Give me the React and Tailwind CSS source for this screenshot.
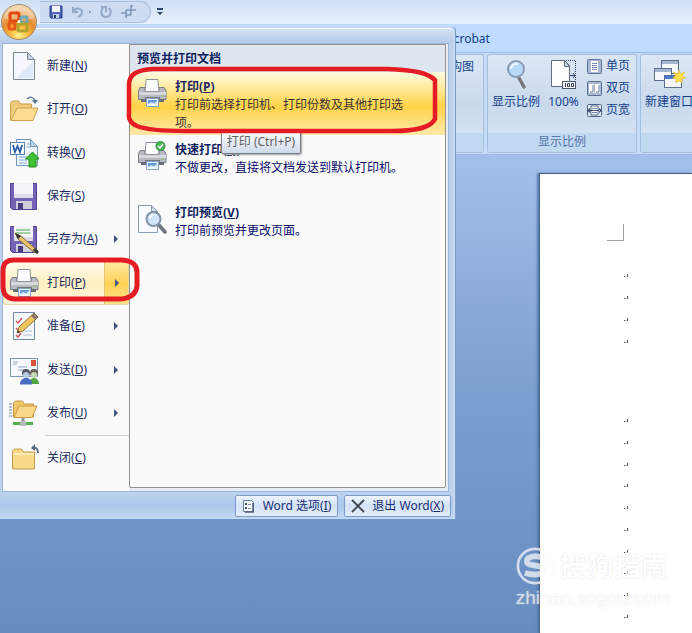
import { useState } from "react";

const menuItems = [
  { id: "new", label: "新建", hotkey: "N", icon: NewIcon },
  { id: "open", label: "打开", hotkey: "O", icon: OpenIcon },
  { id: "convert", label: "转换", hotkey: "V", icon: ConvertIcon },
  { id: "save", label: "保存", hotkey: "S", icon: SaveIcon },
  { id: "saveAs", label: "另存为", hotkey: "A", icon: SaveAsIcon, sub: true },
  { id: "print", label: "打印", hotkey: "P", icon: PrinterIcon, sub: true },
  { id: "prepare", label: "准备", hotkey: "E", icon: PrepareIcon, sub: true },
  { id: "send", label: "发送", hotkey: "D", icon: SendIcon, sub: true },
  { id: "publish", label: "发布", hotkey: "U", icon: PublishIcon, sub: true },
];

const printItems = [
  { id: "print", label: "打印", hotkey: "P", text: "打印前选择打印机、打印份数及其他打印选项。", icon: PrinterIcon },
  { id: "quick", label: "快速打印", hotkey: "Q", text: "不做更改，直接将文档发送到默认打印机。", icon: QuickPrintIcon },
  { id: "preview", label: "打印预览", hotkey: "V", text: "打印前预览并更改页面。", icon: PreviewIcon },
];

export default function App() {
  const [active, setActive] = useState("print");

  return (
    <div className="relative flex min-h-screen flex-col overflow-hidden bg-[#6f95c6] font-['Noto_Sans','Noto_Sans_CJK_SC',sans-serif] text-xs text-[#15428b]">
      <TitleBar />
      <Ribbon />
      <Workspace />
      <OfficeMenu active={active} onSelect={setActive} />
      <div className="absolute left-0 top-1">
        <OfficeButton />
      </div>
      <Watermark />
    </div>
  );
}

function TitleBar() {
  return (
    <header className="flex h-6 items-center bg-linear-to-b from-[#cfdff5] via-[#dbe8f9] to-[#e8f1fc] pl-10">
      <div className="flex h-[22px] w-[111px] items-center gap-2 rounded-r-full border border-l-0 border-[#a9bfdd] bg-[#cddcf0] pl-[9px]">
        <button aria-label="保存">
          <svg width="14" height="14" viewBox="0 0 14 14">
            <path d="M1 1h12v12H2l-1-1z" fill="#5064b8" stroke="#283a84" />
            <path d="M3 1h8v6H3z" fill="#f1f5fc" />
            <path d="M4 9h6v4H4z" fill="#c4cde5" />
            <path d="M5 10h2v3H5z" fill="#26336f" />
          </svg>
        </button>
        <button aria-label="撤消" className="flex items-center gap-1">
          <svg width="14" height="14" viewBox="0 0 14 14" fill="none" stroke="#96aac8" strokeWidth="2">
            <path d="M2 2v5h5M2 7c3-5 9-4 9 0 0 2-2 4-4 5" />
          </svg>
          <span className="size-[2px] bg-[#93a5c0]" />
        </button>
        <button aria-label="重复">
          <svg width="14" height="14" viewBox="0 0 14 14" fill="none" stroke="#96aac8" strokeWidth="2">
            <path d="M10 3c3 3 2 9-3 9s-6-6-3-9M2 2h5v5" />
          </svg>
        </button>
        <button aria-label="对齐">
          <svg width="15" height="14" viewBox="0 0 15 14" fill="none" stroke="#7f95b6" strokeWidth="1.500">
            <path d="M0 8h5M5 5v8M5 5h10M10 1v9M5 10h5M9 1h3" />
          </svg>
        </button>
      </div>
      <button aria-label="自定义快速访问工具栏" className="ml-[5px]">
        <svg width="8" height="8" viewBox="0 0 8 8" fill="#2f4873">
          <path d="M1 0h6v2H1zM1 4h6L4 7z" />
        </svg>
      </button>
    </header>
  );
}

function Ribbon() {
  return (
    <>
      <div role="tablist" className="flex h-7 items-center bg-[#bfdbff] pl-[446px] pt-[2px]">
        <button role="tab">Acrobat</button>
      </div>
      <div className="flex h-[103px] shrink-0 gap-[3px] border-y border-[#9dbbe4] bg-[#c6dbf5] py-[1px]">
        <RibbonGroup className="w-[484px] shrink-0">
          <div className="flex justify-end px-[9px] pt-1">
            <button>文档结构图</button>
          </div>
        </RibbonGroup>
        <RibbonGroup label="显示比例" className="w-[150px] shrink-0">
          <div className="flex justify-between pl-1 pr-[6px] pt-[3px]">
            <button className="flex flex-col items-center gap-1">
              <ZoomIcon />
              显示比例
            </button>
            <button className="flex flex-col items-center gap-1">
              <HundredIcon />
              100%
            </button>
            <div className="flex flex-col gap-[6px]">
              <button className="flex items-center gap-1">
                <OnePageIcon />
                单页
              </button>
              <button className="flex items-center gap-1">
                <TwoPagesIcon />
                双页
              </button>
              <button className="flex items-center gap-1">
                <PageWidthIcon />
                页宽
              </button>
            </div>
          </div>
        </RibbonGroup>
        <RibbonGroup className="min-w-[64px] flex-1">
          <div className="flex pl-1 pt-[3px]">
            <button className="flex shrink-0 flex-col items-center gap-1 whitespace-nowrap">
              <NewWindowIcon />
              新建窗口
            </button>
          </div>
        </RibbonGroup>
      </div>
    </>
  );
}

function RibbonGroup({ label, className, children }) {
  return (
    <section
      className={`flex flex-col overflow-hidden rounded-[3px] border border-[#a3bfdf] bg-linear-to-b from-[#dce7f4] via-[#c9d9ed] to-[#d9e8f6] ${className}`}
    >
      <div className="flex-1">{children}</div>
      <div className="h-[19px] bg-[#c1d8f1] text-center leading-[18px] text-[#5476a8]">{label}</div>
    </section>
  );
}

function Workspace() {
  return (
    <main className="flex flex-1 bg-linear-to-b from-[#a3c0ea] via-[#7b9fd0] to-[#668cc0] pl-[539px] pt-[18px]">
      <div className="flex-1 border-l border-t border-[#48607f] bg-white pb-1 pt-[50px] shadow-[-2px_0_2px_#587cae]">
        <div className="ml-[67px] size-[17px] border-b border-r border-[#a0a0a0]" />
        <div className="ml-[84px] mt-6 grid h-[87px] auto-rows-fr items-center">
          {Array.from({ length: 4 }, (_, i) => (
            <ParagraphMark key={i} />
          ))}
        </div>
        <div className="ml-[84px] mt-[58px] grid h-[217px] auto-rows-fr items-center">
          {Array.from({ length: 10 }, (_, i) => (
            <ParagraphMark key={i} />
          ))}
        </div>
      </div>
    </main>
  );
}

function ParagraphMark() {
  return (
    <svg width="6" height="5" viewBox="0 0 6 5">
      <path d="M3 1h1v3H3z" fill="#555" />
      <path d="M0 3h1v1H0z" fill="#444" />
      <path d="M1 3h2v1H1z" fill="#ccc" />
    </svg>
  );
}

function OfficeMenu({ active, onSelect }) {
  return (
    <div className="absolute left-0 top-[27px] w-[455px] rounded-tr-[4px] border-r-2 border-t border-[#c7d9f0] bg-[#bed2ee] shadow-[1px_0_0_#7f9cc5]">
      <div className="h-[15px] rounded-tr-[4px] border-t border-white bg-linear-to-b from-[#d4e2f4] to-[#b4cbe9]" />
      <div className="ml-[2px] mr-[4px] flex h-[449px] border border-[#9bb5da] bg-[#e8ecf3]">
        <nav className="w-[126px] bg-[#fafafa]">
          <div className="grid h-[391px] auto-rows-fr">
            {menuItems.map((m) => (
              <MenuRow key={m.id} item={m} active={active === m.id} onSelect={onSelect} />
            ))}
          </div>
          <div className="ml-[42px] border-t border-[#cdd0d5]" />
          <MenuRow item={{ id: "close", label: "关闭", hotkey: "C", icon: CloseIcon }} onSelect={onSelect} />
        </nav>
        <section className="mb-[3px] mr-[2px] flex-1 rounded-b-[2px] border border-[#96938c] bg-[#fafafa] text-[#0b0b6b]">
          <h2 className="h-[27px] bg-[#dde6ee] pl-[7px] font-bold leading-[27px] text-[#0e2260]">预览并打印文档</h2>
          <div className="relative">
            {printItems.map((p, i) => (
              <button
                key={p.id}
                className={`flex h-[63px] w-full items-start gap-2 pl-[7px] pr-[36px] pt-[6px] text-left ${
                  i === 0 ? "bg-[linear-gradient(180deg,#fffbe0_0%,#ffeeab_20%,#ffd348_55%,#ffe28a_85%,#ffe9a8_100%)]" : ""
                }`}
              >
                <span className="shrink-0">
                  <p.icon />
                </span>
                <span className="leading-[18px]">
                  <span className={`block font-bold ${i === 0 ? "text-[#26265e]" : "text-[#0e2260]"}`}>
                    {p.label}(<u>{p.hotkey}</u>)
                  </span>
                  <span className={`block ${i === 0 ? "text-[#3a3230]" : ""}`}>{p.text}</span>
                </span>
              </button>
            ))}
            <div
              role="tooltip"
              className="absolute left-[91px] top-[58px] h-6 w-20 rounded-[2px] border border-[#7c7c80] bg-linear-to-b from-white to-[#cfdaec] text-center leading-[22px] text-[#626262] shadow-[1px_1px_2px_#a0a0a0]"
            >
              打印 (Ctrl+P)
            </div>
            <svg
              className="pointer-events-none absolute left-[-5px] top-[-7px]"
              width="316"
              height="70"
              viewBox="0 0 316 70"
              fill="none"
              stroke="#e51c23"
              strokeWidth="4.500"
            >
              <path d="M28 4H262C290 5 303 8 310 15V54C306 62 294 66 266 66H60C40 66 22 65 12 61C5 58 3 54 4 48V20C4 9 12 5 28 4Z" />
            </svg>
          </div>
        </section>
      </div>
      <footer className="flex h-[27px] items-center justify-end gap-[6px] bg-linear-to-b from-[#bfd3ef] via-[#abc7ea] to-[#c3d9f4] pr-[2px]">
        <FooterButton icon={<OptionsIcon />}>
          Word 选项(<u>I</u>)
        </FooterButton>
        <FooterButton
          icon={
            <svg width="14" height="14" viewBox="0 0 14 14" stroke="#3f434b" strokeWidth="1.800">
              <path d="M1 1l12 12M13 1L1 13" />
            </svg>
          }
        >
          退出 Word(<u>X</u>)
        </FooterButton>
      </footer>
      {/* red marker around the active row */}
      <svg
        className="pointer-events-none absolute left-0 top-[228px]"
        width="140"
        height="46"
        viewBox="0 0 140 46"
        fill="none"
        stroke="#e51c23"
        strokeWidth="5"
      >
        <path d="M14 4H122C133 5 137 9 137 16V30C136 38 130 43 118 43H14C6 42 3 38 3 30V15C3 7 7 4 14 4Z" />
      </svg>
    </div>
  );
}

function MenuRow({ item, active, onSelect }) {
  const Icon = item.icon;
  return (
    <button
      onClick={() => onSelect(item.id)}
      className={`flex min-h-[43px] w-full items-center text-left text-[#1b2a63] ${
        active ? "rounded-[2px] border border-[#e8d8a4] bg-linear-to-b from-[#fffdf0] via-[#ffefc0] to-[#fff6dc]" : "border border-transparent"
      }`}
    >
      <span className="ml-[5px] mr-2 shrink-0">
        <Icon />
      </span>
      <span className="flex-1 whitespace-nowrap">
        {item.label}(<u>{item.hotkey}</u>)
      </span>
      {item.sub && (
        <span
          className={`flex w-6 items-center justify-center self-stretch ${
            active ? "border-l border-[#e3c675] bg-linear-to-b from-[#ffe9a0] via-[#ffd154] to-[#ffe08a]" : ""
          }`}
        >
          <svg width="4" height="8" viewBox="0 0 4 8" fill="#40557f">
            <path d="M0 0l4 4-4 4z" />
          </svg>
        </span>
      )}
    </button>
  );
}

function FooterButton({ icon, children }) {
  return (
    <button className="flex h-[22px] items-center gap-[7px] whitespace-nowrap rounded-[2px] border border-[#7d9cca] bg-linear-to-b from-[#edf4fd] via-[#d3e2f6] to-[#e3eefb] px-[6px] text-[#1c2f75]">
      {icon}
      <span>{children}</span>
    </button>
  );
}

function Watermark() {
  return (
    <div className="pointer-events-none absolute bottom-[23px] right-[22px] flex flex-col text-white opacity-70 [text-shadow:0_0_2px_#d4d4d4]">
      <div className="flex items-center gap-[6px]">
        <svg width="38" height="38" viewBox="0 0 38 38" fill="none" stroke="#fff">
          <circle cx="19" cy="19" r="18" stroke="#e4e4e4" strokeWidth="1" />
          <circle cx="19" cy="19" r="17" strokeWidth="2.500" />
          <path d="M28 11C20 8 10 9 11 15C12 20 27 17 27 23C27 29 15 28 9 26" stroke="#e6e6e6" strokeWidth="6" />
          <path d="M28 11C20 8 10 9 11 15C12 20 27 17 27 23C27 29 15 28 9 26" strokeWidth="5" />
        </svg>
        <span className="text-[27px] font-medium leading-[38px]">搜狗指南</span>
      </div>
      <span className="font-['Liberation_Sans',sans-serif] text-[19px] leading-[25px]">zhinan.sogou.com</span>
    </div>
  );
}

function OfficeButton() {
  return (
    <button aria-label="Office 按钮" className="block">
      <svg width="38" height="38" viewBox="0 0 38 38">
        <defs>
          <radialGradient id="orb" cx="50%" cy="88%" r="88%">
            <stop offset="0" stopColor="#fff08f" />
            <stop offset=".3" stopColor="#fbb83c" />
            <stop offset=".55" stopColor="#e68a2c" />
            <stop offset=".8" stopColor="#efb878" />
            <stop offset="1" stopColor="#f7e6c8" />
          </radialGradient>
        </defs>
        <circle cx="19" cy="18" r="17.500" fill="url(#orb)" stroke="#a08a6c" />
        <path d="M4 14C7 0 31 0 34 14C26 18 12 18 4 14Z" fill="#fff" opacity=".3" />
        <g fill="none" strokeWidth="3">
          <rect x="10" y="9" width="9" height="8" rx="1" stroke="#e04a12" />
          <rect x="21" y="13" width="6" height="6" rx="1" stroke="#6fa9b8" />
          <rect x="9" y="19" width="6" height="6" rx="1" stroke="#e8591a" />
          <rect x="18" y="20" width="9" height="7" rx="1" stroke="#b0a22c" />
        </g>
        <path d="M18 16h2v3h-3z" fill="#fff5c0" />
      </svg>
    </button>
  );
}

function NewIcon() {
  return (
    <svg width="30" height="30" viewBox="0 0 30 30">
      <path d="M4.500 1.500h14l7 7v20h-21z" fill="#f5f9ff" stroke="#7c8794" />
      <path d="M7 27L24 10v17z" fill="#dfe9f8" />
      <path d="M18.500 1.500v7h7z" fill="#c9d5e6" stroke="#7c8794" />
    </svg>
  );
}

function OpenIcon() {
  return (
    <svg width="30" height="30" viewBox="0 0 30 30">
      <path d="M1.500 26V9l2-2h6l2 3h11v16z" fill="#f0cb7a" stroke="#c99b4c" />
      <path d="M2 26.500L8 14h21l-5 12.500z" fill="#fbdc91" stroke="#cf9f4d" />
      <path d="M18 5c3-3 7-2 8 2" fill="none" stroke="#66809f" strokeWidth="1.500" />
      <path d="M23 6h6l-3 4z" fill="#52708f" />
    </svg>
  );
}

function ConvertIcon() {
  return (
    <svg width="30" height="30" viewBox="0 0 30 30">
      <path d="M7.500 1.500h14l7 7v19h-21z" fill="#eef5fe" stroke="#7396be" />
      <path d="M21.500 1.500v7h7z" fill="#bcd1ea" stroke="#7396be" />
      <path d="M18 6h3M18 9h4M10 19h8M10 22h8M10 25h8" stroke="#85a9d3" />
      <rect x="1.500" y="4.500" width="14" height="12" fill="#f9fbff" stroke="#5982b8" />
      <path d="M4 7l2 7 2.500-6 2.500 6 2-7" fill="none" stroke="#2b5cab" strokeWidth="1.800" />
      <path d="M23.500 14l7 7h-3.500v8h-7v-8h-3.500z" fill="#3fc131" stroke="#218a1d" />
    </svg>
  );
}

function Floppy() {
  return (
    <>
      <path d="M1.500 2.500h26v26h-24l-2-2z" fill="#7462b4" stroke="#54438f" />
      <path d="M5 2h19v15H5z" fill="#f4f4f8" />
      <path d="M5 13h19v4H5z" fill="#dcdce8" />
      <path d="M7 20h16v8H7z" fill="#cfcfd8" />
      <path d="M9 22h5v6H9z" fill="#4b3c80" />
    </>
  );
}

function SaveIcon() {
  return (
    <svg width="30" height="30" viewBox="0 0 30 30">
      <Floppy />
    </svg>
  );
}

function SaveAsIcon() {
  return (
    <svg width="30" height="30" viewBox="0 0 30 30">
      <Floppy />
      <path d="M7 6h14M7 9h14" stroke="#49a84a" />
      <path d="M6 9l6 3 17 15-3 2-17-14z" fill="#e9c46f" stroke="#8c6b35" />
      <path d="M6 9l6 3-3 3z" fill="#2f2f35" />
      <path d="M25 25l4 4" stroke="#34343c" strokeWidth="3" />
    </svg>
  );
}

function Printer() {
  return (
    <>
      <path d="M3 9.500h5v4h14v-4h5l2 3v9H1.500v-9z" fill="#b7bbc1" stroke="#7a7e86" />
      <path d="M2 14h27v3H2z" fill="#d6d9dd" />
      <path d="M8 13.500L9 1.500h12L22 13.500z" fill="#fbfdff" stroke="#8b929c" />
      <path d="M4 21h5v3H4zM22 21h5v3h-5z" fill="#6a6e76" />
      <path d="M8 19h15v2H8z" fill="#73777f" />
      <path d="M9.500 20.500h12v8h-12z" fill="#f3f9ff" stroke="#7ea3ce" />
      <path d="M11 22h9v4h-9z" fill="#5e9be0" />
      <path d="M11 26l3-2 3 1 3-2v3z" fill="#cfe3f8" />
      <path d="M24 18h3" stroke="#8cbf5a" />
    </>
  );
}

function PrinterIcon() {
  return (
    <svg width="30" height="30" viewBox="0 0 30 30">
      <Printer />
    </svg>
  );
}

function QuickPrintIcon() {
  return (
    <svg width="30" height="30" viewBox="0 0 30 30">
      <Printer />
      <circle cx="23.500" cy="5" r="4.500" fill="#4db35a" stroke="#2c8a3c" />
      <path d="M21 5l2 2 3-4" fill="none" stroke="#fff" strokeWidth="1.500" />
    </svg>
  );
}

function PreviewIcon() {
  return (
    <svg width="30" height="30" viewBox="0 0 30 30">
      <path d="M1.500 1.500h13l6 6v21h-19z" fill="#f7fbff" stroke="#8a9bb2" />
      <path d="M14.500 1.500v6h6z" fill="#cfdbea" stroke="#8a9bb2" />
      <path d="M21 20l7 8" stroke="#6d747e" strokeWidth="3.500" strokeLinecap="round" />
      <circle cx="16.500" cy="15" r="7" fill="#cfe5fb" stroke="#8794a6" strokeWidth="2" />
      <path d="M12.500 14c1-3 4-4 6-3" fill="none" stroke="#fff" strokeWidth="1.500" />
    </svg>
  );
}

function PrepareIcon() {
  return (
    <svg width="30" height="30" viewBox="0 0 30 30">
      <path d="M4.500 1.500h21v27h-21z" fill="#f5f9fe" stroke="#7288a6" />
      <path d="M7 10l2 2 4-5M7 17l2 2 4-5M7 24l2 2 3-4" fill="none" stroke="#d4575c" strokeWidth="1.500" />
      <path d="M14 24h9M16 20h7" stroke="#aebfd6" />
      <path d="M8 22l2-6L25 2l4 4-15 14z" fill="#f1c65f" stroke="#94713a" />
      <path d="M25 2l4 4-3 3-4-4z" fill="#8d7b6f" />
      <path d="M8 22l1-3 2 2z" fill="#3b3530" />
    </svg>
  );
}

function SendIcon() {
  return (
    <svg width="30" height="30" viewBox="0 0 30 30">
      <path d="M1.500 3.500h27v18h-27z" fill="#f6f9fd" stroke="#7e93b0" />
      <path d="M22 5h5v6h-5z" fill="#d7513a" />
      <path d="M4 7h5M4 9h4" stroke="#9db1cc" />
      <path d="M9 12h9M9 15h6" stroke="#8fa6c5" />
      <path d="M20 29c0-8 10-8 10 0z" fill="#53a846" />
      <circle cx="25" cy="18" r="4" fill="#6a5f56" />
      <circle cx="25" cy="20" r="3" fill="#c2d9b4" />
      <path d="M11 29.500c0-9 12-9 12 0z" fill="#4b6cc4" />
      <circle cx="17" cy="18" r="4" fill="#55595f" />
      <circle cx="17" cy="20" r="3" fill="#b5cdea" />
    </svg>
  );
}

function PublishIcon() {
  return (
    <svg width="30" height="30" viewBox="0 0 30 30">
      <path d="M0 6h3M0 9h3M0 12h3M0 15h3M0 18h3" stroke="#7189ae" />
      <path d="M4.500 19V5l2-2h7l2 3h9v13z" fill="#f1c76b" stroke="#c7974a" />
      <path d="M5 19.500L10 8h18l-5 11.500z" fill="#fad88a" stroke="#cb9947" />
      <path d="M14 20v5" stroke="#8f969e" strokeWidth="3" />
      <path d="M4 24h8v3H4zM16 24h8v3h-8z" fill="#52b04e" />
      <path d="M11 23h6v5h-6z" fill="#b4bbc3" />
    </svg>
  );
}

function CloseIcon() {
  return (
    <svg width="30" height="30" viewBox="0 0 30 30">
      <path d="M3.500 26V8l2-2h7l2 3h11v17z" fill="#f8d988" stroke="#c39a50" />
      <path d="M4 10h21v2H4z" fill="#fdebb8" />
      <path d="M24 5c3-1 5 1 5 5" fill="none" stroke="#55677f" strokeWidth="1.800" />
      <path d="M26 1v7l-4-3z" fill="#55677f" />
    </svg>
  );
}

function ZoomIcon() {
  return (
    <svg width="30" height="32" viewBox="0 0 30 32">
      <path d="M18 20l5 9" stroke="#77797e" strokeWidth="3.500" strokeLinecap="round" />
      <circle cx="15" cy="11" r="8" fill="#b8dafa" stroke="#8a9bb3" strokeWidth="2" />
      <path d="M10 11c0-4 4-6 7-5" fill="none" stroke="#f2f9ff" strokeWidth="2" />
    </svg>
  );
}

function HundredIcon() {
  return (
    <svg width="28" height="32" viewBox="0 0 28 32">
      <path d="M2.500 2.500h13l5 5v21h-18z" fill="#fdfdfe" stroke="#5f6b80" />
      <path d="M15.500 2.500v6h5z" fill="#cdd8e8" stroke="#5f6b80" />
      <path d="M17 2.500h9.500V22" fill="none" stroke="#34456b" strokeDasharray="1 1" />
      <path d="M21 17.500h5M24 15l2 2.500-2 2.500" fill="none" stroke="#34456b" />
      <rect x="13.500" y="23.500" width="13" height="7" fill="#f4f6fa" stroke="#4c576b" />
      <path d="M16.500 25v4M18.500 25.500h2v3h-2zM22.500 25.500h2v3h-2z" fill="none" stroke="#3c4656" />
    </svg>
  );
}

function OnePageIcon() {
  return (
    <svg width="15" height="15" viewBox="0 0 15 15">
      <rect x=".5" y=".5" width="14" height="14" rx="1" fill="#a9b9d2" stroke="#5c7297" />
      <path d="M4 2h7v11H4z" fill="#fff" />
      <path d="M5 4.500h5M5 6.500h5M5 8.500h5M5 10.500h5" stroke="#7188b0" />
    </svg>
  );
}

function TwoPagesIcon() {
  return (
    <svg width="15" height="15" viewBox="0 0 15 15">
      <rect x=".5" y=".5" width="14" height="14" rx="1" fill="#a9b9d2" stroke="#5c7297" />
      <path d="M2 3h5v9H2zM8 3h5v9H8z" fill="#fff" />
      <path d="M6 4v7H3M12 4v7H9" fill="none" stroke="#5f779f" />
    </svg>
  );
}

function PageWidthIcon() {
  return (
    <svg width="15" height="15" viewBox="0 0 15 15">
      <rect x=".5" y="1.500" width="14" height="12" rx="1" fill="#dfe6f0" stroke="#50658a" />
      <path d="M4 3h7v9H4z" fill="#fff" stroke="#50658a" />
      <path d="M5 5.500h5M5 9.500h5" stroke="#7188b0" />
      <path d="M0 7.500l3-2.500v5zM15 7.500L12 5v5zM2 7h11v1H2z" fill="#3b4e70" />
    </svg>
  );
}

function NewWindowIcon() {
  return (
    <svg width="34" height="32" viewBox="0 0 34 32">
      <g fill="#f6f8fc" stroke="#5c6f90">
        <rect x="9.500" y="2.500" width="17" height="13" />
        <rect x="2.500" y="10.500" width="17" height="12" />
        <rect x="12.500" y="17.500" width="17" height="12" />
      </g>
      <path d="M10 3h16v3H10zM3 11h16v3H3z" fill="#a7b6d0" />
      <path d="M13 18h16v3H13z" fill="#4b77d6" />
      <path d="M27 12l1.500 4 4-2-2 4 3 2-4 1 1 4-3.500-2-3.500 2 1-4-4-1 3-2-2-4 4 2z" fill="#ffdf4a" stroke="#eab92b" strokeWidth=".6" />
    </svg>
  );
}

function OptionsIcon() {
  return (
    <svg width="14" height="14" viewBox="0 0 14 14">
      <path d="M1.500 1.500h8l2 2v9h-10z" fill="#f9fbfe" stroke="#6580a8" />
      <path d="M11 4v9H3" fill="none" stroke="#4c5e7d" strokeWidth="1.500" />
      <path d="M3 4h2v2H3zM3 8h2v2H3z" fill="#3d4f70" />
      <path d="M6 5.500h3M6 9.500h3" stroke="#7f93b2" />
    </svg>
  );
}
